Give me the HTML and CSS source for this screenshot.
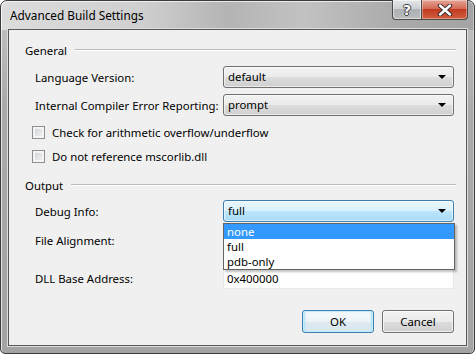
FILE: index.html
```html
<!DOCTYPE html>
<html lang="en">
<head>
    <meta charset="UTF-8">
    <title>Advanced Build Settings</title>
    <link rel="stylesheet" href="styles.css">
</head>
<body>
    <div class="window">
        <div class="titlebar">
            <span class="title">Advanced Build Settings</span>
            <div class="caption">
                <button class="help">?</button>
                <button class="close">
                    <svg width="18" height="12" viewBox="0 0 18 12">
                        <path d="M4 1.5 L14 10.5 M14 1.5 L4 10.5" stroke="#3a2a2a" stroke-width="4.4" stroke-linecap="round"/>
                        <path d="M4 1.5 L14 10.5 M14 1.5 L4 10.5" stroke="#fff" stroke-width="2.4" stroke-linecap="round"/>
                    </svg>
                </button>
            </div>
        </div>

        <div class="client">
            <div class="group">
                <span>General</span>
                <div class="line"></div>
            </div>

            <div class="row lang">
                <label>Language Version:</label>
                <div class="combo">default<i class="arrow"></i></div>
            </div>
            <div class="row err">
                <label>Internal Compiler Error Reporting:</label>
                <div class="combo">prompt<i class="arrow"></i></div>
            </div>

            <div class="check first">
                <span class="box"></span>
                <span>Check for arithmetic overflow/underflow</span>
            </div>
            <div class="check">
                <span class="box"></span>
                <span>Do not reference mscorlib.dll</span>
            </div>

            <div class="group output">
                <span>Output</span>
                <div class="line"></div>
            </div>

            <div class="row debug">
                <label>Debug Info:</label>
                <div class="combo-wrap">
                    <div class="combo focus">full<i class="arrow"></i></div>
                    <ul class="dropdown">
                        <li class="selected">none</li>
                        <li>full</li>
                        <li>pdb-only</li>
                    </ul>
                </div>
            </div>
            <div class="row file">
                <label>File Alignment:</label>
                <div class="combo"><i class="arrow"></i></div>
            </div>
            <div class="row dll">
                <label>DLL Base Address:</label>
                <div class="textbox">0x400000</div>
            </div>

            <div class="buttons">
                <button class="btn default">OK</button>
                <button class="btn">Cancel</button>
            </div>
        </div>
    </div>
</body>
</html>
```

FILE: styles.css
```css
*{
    margin: 0;
    padding: 0;
    box-sizing: border-box;
}
ul,li{
    list-style: none;
}
body{
    background: #fff;
    font-family: 'Noto Sans', 'Liberation Sans', sans-serif;
    font-size: 11.4px;
    color: #000;
    white-space: nowrap;
}

.window{
    width: 475px;
    height: 354px;
    border: 1px solid #3b3b3b;
    border-radius: 7px 7px 5px 5px;
    padding: 0 7px 7px;
    background:
        linear-gradient(90deg, #dcdcdc 0%, #cfcfcf 30%, #b4b4b4 48%, #c2c2c2 64%, #a9a9a9 85%, #a4a4a4 100%) top / 100% 29px no-repeat,
        linear-gradient(#c4c4c4 0%, #aaaaaa 30%, #a3a3a3 100%);
    box-shadow: inset 1px 1px 0 rgba(255,255,255,0.7), inset -1px 0 0 rgba(255,255,255,0.4);
    display: flex;
    flex-direction: column;
}
.titlebar{
    height: 28px;
    display: flex;
    justify-content: space-between;
    align-items: flex-start;
}
.titlebar .title{
    margin: 6px 0 0 2px;
    font-size: 11.8px;
    color: #000;
}
.caption{
    display: flex;
    margin-top: -1px;
    margin-right: -1px;
}
.caption button{
    height: 20px;
    border: 1px solid #4a4a4a;
    border-top: 0;
    font-family: 'DejaVu Sans', sans-serif;
}
.caption .help{
    width: 29px;
    border-radius: 0 0 0 4px;
    border-right: 0;
    background: linear-gradient(#e4e6e8 0%, #cfd2d5 45%, #aeb1b4 50%, #b9bcbe 100%);
    box-shadow: inset 0 0 0 1px rgba(255,255,255,0.5);
    color: #fff;
    font-weight: bold;
    font-size: 14px;
    line-height: 18px;
    text-shadow: 1px 0 0 #3a3a3a, -1px 0 0 #3a3a3a, 0 1px 0 #3a3a3a, 0 -1px 0 #3a3a3a;
}
.caption .close{
    width: 47px;
    border-radius: 0 0 4px 0;
    background: linear-gradient(#e6a698 0%, #d46a55 45%, #c23a22 50%, #d0603f 100%);
    box-shadow: inset 0 0 0 1px rgba(255,255,255,0.35);
    display: flex;
    align-items: center;
    justify-content: center;
}

.client{
    flex: 1;
    background: #f0f0f0;
    border: 1px solid #575757;
    box-shadow: 0 0 0 1px #dcdcdc;
    padding: 12px 10px 0 16px;
}

.group{
    height: 16px;
    display: flex;
    align-items: center;
}
.group span{
    margin-right: 8px;
}
.group .line{
    flex: 1;
    height: 2px;
    border-top: 1px solid #bcbcbc;
    border-bottom: 1px solid #fff;
}
.group.output{
    margin-top: 13px;
}

.row{
    display: grid;
    grid-template-columns: 188px 231px;
    align-items: center;
    padding-left: 10px;
    height: 22px;
}
.row.lang{
    margin-top: 8px;
}
.row.err{
    margin-top: 6px;
}
.row.debug{
    margin-top: 7px;
}
.row.file{
    margin-top: 7px;
}
.row.dll{
    margin-top: 16px;
}

.combo{
    position: relative;
    height: 22px;
    border: 1px solid #707070;
    border-radius: 3px;
    background: linear-gradient(#f2f2f2 0%, #ebebeb 50%, #dddddd 50%, #cfcfcf 100%);
    box-shadow: inset 0 0 0 1px rgba(255,255,255,0.6);
    padding-left: 4px;
    line-height: 20px;
}
.combo.focus{
    border-color: #3c7fb1;
    background: linear-gradient(#eaf6fd 0%, #d9f0fc 50%, #bee6fd 50%, #a7d9f5 100%);
}
.combo .arrow{
    position: absolute;
    right: 7px;
    top: 8px;
    border-left: 4px solid transparent;
    border-right: 4px solid transparent;
    border-top: 4px solid #000;
}
.combo-wrap{
    position: relative;
}
.dropdown{
    position: absolute;
    top: 23px;
    left: 0;
    width: 232px;
    z-index: 2;
    background: #fff;
    border: 1px solid #646464;
    box-shadow: 2px 2px 2px rgba(0,0,0,0.25);
}
.dropdown li{
    height: 15px;
    line-height: 15px;
    padding-left: 3px;
}
.dropdown li.selected{
    background: #3399ff;
    color: #fff;
}

.textbox{
    height: 21px;
    border: 1px solid #e3e9ef;
    border-top-color: #abadb3;
    background: #fff;
    padding-left: 3px;
    line-height: 19px;
}

.check{
    display: flex;
    align-items: center;
    height: 16px;
    padding-left: 7px;
    margin-top: 8px;
}
.check .box{
    width: 13px;
    height: 13px;
    margin-right: 7px;
    border: 1px solid #8e8f8f;
    background: linear-gradient(135deg, #cbcfd5, #f6f6f6);
    box-shadow: inset 0 0 0 2px #f4f4f4;
}

.buttons{
    display: flex;
    justify-content: flex-end;
    gap: 8px;
    padding-right: 2px;
    margin-top: 21px;
}
.btn{
    width: 72px;
    height: 23px;
    border: 1px solid #707070;
    border-radius: 3px;
    background: linear-gradient(#f2f2f2 0%, #ebebeb 50%, #dddddd 50%, #cfcfcf 100%);
    box-shadow: inset 0 0 0 1px rgba(255,255,255,0.7);
    font-family: 'Noto Sans', 'Liberation Sans', sans-serif;
    font-size: 11.4px;
    color: #000;
}
.btn.default{
    border-color: #3c7fb1;
    background: linear-gradient(#f4f9fc 0%, #ecf3f7 50%, #e0ebf1 50%, #d8e6ee 100%);
    box-shadow: inset 0 0 0 1px #c4ecfb, inset 2px 0 2px #a9e4f7, inset -2px 0 2px #a9e4f7;
}
```
